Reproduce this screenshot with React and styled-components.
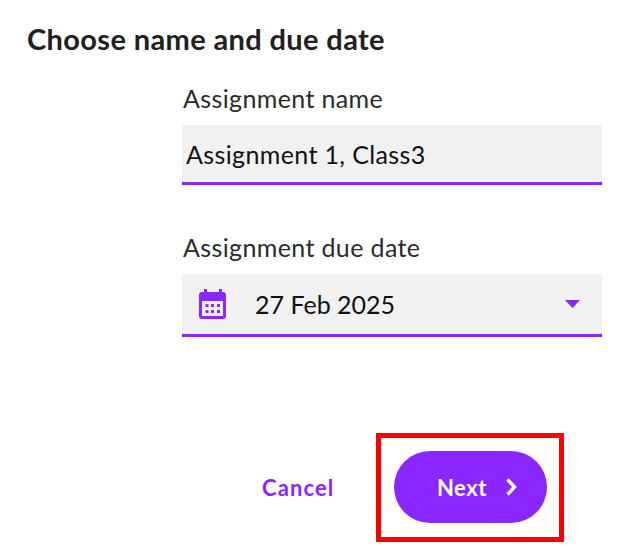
import React from 'react';
import styled, { createGlobalStyle } from 'styled-components';

const Global = createGlobalStyle`
  html, body { margin: 0; padding: 0; background: #fff; }
  body { font-family: "Lato", "Noto Sans", sans-serif; }
`;

const Page = styled.div`
  width: 624px;
  height: 550px;
  box-sizing: border-box;
  padding: 21px 22px 0 27px;
  display: flex;
  flex-direction: column;
  overflow: hidden;
`;

const Title = styled.h1`
  margin: 0;
  font-size: 29px;
  line-height: 36px;
  font-weight: 700;
  color: #212121;
  letter-spacing: 0.37px;
  white-space: nowrap;
`;

const Form = styled.div`
  margin: 26px 0 0 155px;
  display: flex;
  flex-direction: column;
`;

const Label = styled.label`
  display: block;
  margin: 0 0 12px 1px;
  font-size: 25px;
  line-height: 30px;
  color: #2b2b2b;
  letter-spacing: 0.37px;
`;

const Field = styled.div`
  box-sizing: border-box;
  height: ${p => p.$h}px;
  margin-bottom: ${p => p.$mb || 0}px;
  background: #f1f1f1;
  border-bottom: 3px solid #8a26ff;
  display: flex;
  align-items: center;
  padding: ${p => p.$pad};
  font-size: 25px;
  color: #111;
  letter-spacing: 0.37px;
`;

const DateText = styled.span`
  margin-left: 29px;
  flex: 1;
  letter-spacing: 0;
`;

const Actions = styled.div`
  margin: 96px 0 0 80px;
  display: flex;
  align-items: center;
`;

const Cancel = styled.button`
  border: 0;
  background: none;
  padding: 0;
  width: 71px;
  margin-right: 43px;
  font: 700 22px "Lato", sans-serif;
  color: #8a26ff;
  letter-spacing: 1.1px;
  white-space: nowrap;
  text-align: left;
`;

const Highlight = styled.div`
  box-sizing: border-box;
  width: 188px;
  height: 109px;
  border: 5px solid #ff0000;
  padding: 13px;
`;

const Next = styled.button`
  width: 153px;
  height: 72px;
  border: 0;
  border-radius: 36px;
  background: #8a26ff;
  color: #fff;
  display: flex;
  align-items: center;
  justify-content: flex-start;
  gap: 18px;
  padding: 0 0 0 43px;
  font: 700 22px "Lato", sans-serif;
  letter-spacing: 0.5px;
`;

const CalendarIcon = () => (
  <svg width="27" height="30" viewBox="0 0 27 30" fill="none">
    <path fillRule="evenodd" clipRule="evenodd" fill="#8a26ff"
      d="M5 0h3v3h12V0h3v3h1a3 3 0 0 1 3 3v21a3 3 0 0 1-3 3H3a3 3 0 0 1-3-3V6a3 3 0 0 1 3-3h2V0zM3 12v15h21V12H3z" />
    <path fill="#8a26ff" d="M6.5 15H9.5v3H6.5zM12 15h3v3h-3zM18 15h3v3h-3zM6.5 21H9.5v3H6.5zM12 21h3v3h-3zM18 21h3v3h-3z" />
  </svg>
);

const Caret = () => (
  <svg width="15" height="8" viewBox="0 0 15 8"><path d="M0 0h15L7.5 8z" fill="#8a26ff" /></svg>
);

const Chevron = () => (
  <svg width="13" height="20" viewBox="0 0 13 20" fill="none">
    <path d="M2.5 2.5 9.5 10 2.5 17.5" stroke="#fff" strokeWidth="3.4" />
  </svg>
);

export default function App() {
  return (
    <Page>
      <Global />
      <Title>Choose name and due date</Title>
      <Form>
        <Label>Assignment name</Label>
        <Field $h={60} $mb={47} $pad="0 0 0 4px">Assignment 1, Class3</Field>
        <Label>Assignment due date</Label>
        <Field $h={63} $pad="0 22px 0 17px">
          <CalendarIcon />
          <DateText>27 Feb 2025</DateText>
          <Caret />
        </Field>
        <Actions>
          <Cancel>Cancel</Cancel>
          <Highlight>
            <Next>Next <Chevron /></Next>
          </Highlight>
        </Actions>
      </Form>
    </Page>
  );
}
